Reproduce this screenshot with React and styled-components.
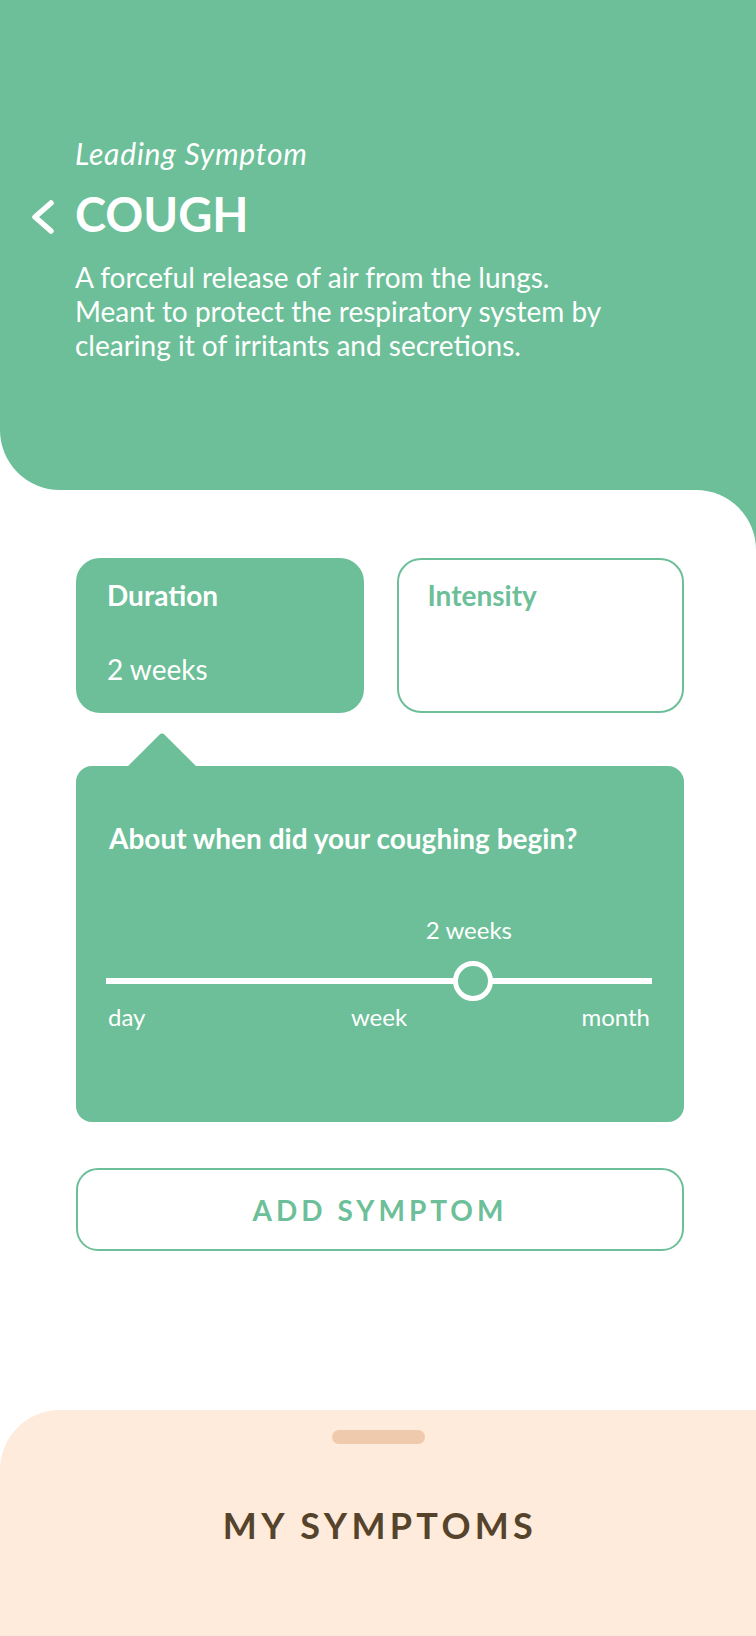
import React from 'react';
import styled, { createGlobalStyle } from 'styled-components';

const GREEN = '#6cbf98';

const GlobalStyle = createGlobalStyle`
  body {
    margin: 0;
    background: #fff;
    font-family: Lato, "Open Sans", sans-serif;
  }
`;

const Page = styled.div`
  width: 756px;
  min-height: 1636px;
  display: flex;
  flex-direction: column;
  background: #fff;
`;

const Header = styled.header`
  height: 490px;
  box-sizing: border-box;
  padding: 135px 30px 0 75px;
  background: ${GREEN};
  border-bottom-left-radius: 60px;
  color: #fff;
  display: flex;
  flex-direction: column;
`;

const Kicker = styled.div`
  font-style: italic;
  font-size: 30px;
  letter-spacing: 0.8px;
  line-height: 36px;
`;

const TitleRow = styled.div`
  display: flex;
  align-items: center;
  gap: 19px;
  margin: 15px 0 0 -45px;
`;

const BackButton = styled.button`
  margin-top: 6px;
  padding: 0;
  border: 0;
  background: none;
  display: flex;
  cursor: pointer;
`;

const Title = styled.h1`
  margin: 0;
  font-size: 47px;
  font-weight: 700;
  line-height: 56px;
`;

const Description = styled.p`
  margin: 18px 0 0;
  font-size: 28px;
  line-height: 34px;
`;

// green behind the white sheet so the rounded top-right corner shows it
const Backdrop = styled.div`
  background: ${GREEN};
  flex: 1;
  display: flex;
`;

const Sheet = styled.main`
  flex: 1;
  background: #fff;
  border-top-right-radius: 60px;
  display: flex;
  flex-direction: column;
`;

const Content = styled.div`
  padding: 68px 72px 0 76px;
  display: flex;
  flex-direction: column;
`;

const Tabs = styled.div`
  display: grid;
  grid-template-columns: 1fr 1fr;
  gap: 33px;
`;

const Tab = styled.div`
  height: 155px;
  box-sizing: border-box;
  padding: 19px 29px 0;
  border: 2px solid ${GREEN};
  border-radius: 24px;
  background: ${(p) => (p.active ? GREEN : '#fff')};
  color: ${(p) => (p.active ? '#fff' : GREEN)};
  display: flex;
  flex-direction: column;
`;

const TabLabel = styled.div`
  font-size: 28px;
  font-weight: 700;
  line-height: 1.2;
`;

const TabValue = styled.div`
  margin-top: 40px;
  font-size: 28px;
  line-height: 1.2;
`;

const Panel = styled.section`
  position: relative;
  margin-top: 53px;
  height: 356px;
  box-sizing: border-box;
  padding: 56px 32px 0 33px;
  background: ${GREEN};
  border-radius: 16px;
  color: #fff;
`;

const Pointer = styled.div`
  position: absolute;
  left: 62px;
  top: -24px;
  width: 48px;
  height: 48px;
  background: ${GREEN};
  border-top-left-radius: 4px;
  transform: rotate(45deg);
`;

const Question = styled.h2`
  margin: 0;
  font-size: 28px;
  font-weight: 700;
  line-height: 1.2;
`;

const Slider = styled.div`
  position: relative;
  margin: 60px 0 0 -3px;
  padding-top: 45px;
`;

const ValueLabel = styled.div`
  position: absolute;
  top: 0;
  transform: translateX(-50%);
  margin-left: -4px;
  font-size: 24px;
  line-height: 1.2;
  white-space: nowrap;
`;

const Track = styled.div`
  position: relative;
  height: 40px;
  display: flex;
  align-items: center;

  &::before {
    content: '';
    flex: 1;
    height: 6px;
    background: #fff;
  }
`;

const Thumb = styled.div`
  position: absolute;
  top: 0;
  width: 40px;
  height: 40px;
  box-sizing: border-box;
  margin-left: -20px;
  border: 5px solid #fff;
  border-radius: 50%;
  background: ${GREEN};
`;

const Ticks = styled.div`
  margin-top: 2px;
  display: grid;
  grid-template-columns: 1fr auto 1fr;
  font-size: 24px;
  line-height: 1.2;
  padding: 0 2px;
`;

const Tick = styled.span`
  text-align: ${(p) => p.align};
`;

const AddButton = styled.button`
  margin-top: 46px;
  height: 83px;
  border: 2px solid ${GREEN};
  border-radius: 22px;
  background: #fff;
  color: ${GREEN};
  font-family: Lato, sans-serif;
  font-size: 28px;
  font-weight: 700;
  letter-spacing: 4px;
  cursor: pointer;
`;

const Drawer = styled.footer`
  margin-top: 159px;
  height: 226px;
  background: #feebdb;
  border-top-left-radius: 60px;
  display: flex;
  flex-direction: column;
  align-items: center;
`;

const Handle = styled.div`
  margin-top: 20px;
  width: 93px;
  height: 14px;
  border-radius: 7px;
  background: #efcaac;
`;

const DrawerTitle = styled.h3`
  margin: 60px 0 0;
  padding-left: 4px;
  font-size: 36px;
  font-weight: 700;
  letter-spacing: 4.3px;
  line-height: 1.2;
  color: #55432b;
`;

const BackIcon = () => (
  <svg width="26" height="36" viewBox="0 0 26 36" fill="none">
    <path d="M21 4 L5 18 L21 32" stroke="#fff" strokeWidth="5.5" strokeLinecap="round" strokeLinejoin="round" />
  </svg>
);

export default function App() {
  const position = 0.672;
  const ticks = [
    ['day', 'left'],
    ['week', 'center'],
    ['month', 'right'],
  ];

  return (
    <Page>
      <GlobalStyle />
      <Header>
        <Kicker>Leading Symptom</Kicker>
        <TitleRow>
          <BackButton aria-label="Back">
            <BackIcon />
          </BackButton>
          <Title>COUGH</Title>
        </TitleRow>
        <Description>
          A forceful release of air from the lungs.
          <br />
          Meant to protect the respiratory system by
          <br />
          clearing it of irritants and secretions.
        </Description>
      </Header>
      <Backdrop>
        <Sheet>
          <Content>
            <Tabs>
              <Tab active>
                <TabLabel>Duration</TabLabel>
                <TabValue>2 weeks</TabValue>
              </Tab>
              <Tab>
                <TabLabel>Intensity</TabLabel>
              </Tab>
            </Tabs>
            <Panel>
              <Pointer />
              <Question>About when did your coughing begin?</Question>
              <Slider>
                <ValueLabel style={{ left: `${position * 100}%` }}>2 weeks</ValueLabel>
                <Track>
                  <Thumb style={{ left: `${position * 100}%` }} />
                </Track>
                <Ticks>
                  {ticks.map(([t, align]) => (
                    <Tick key={t} align={align}>{t}</Tick>
                  ))}
                </Ticks>
              </Slider>
            </Panel>
            <AddButton>ADD SYMPTOM</AddButton>
          </Content>
          <Drawer>
            <Handle />
            <DrawerTitle>MY SYMPTOMS</DrawerTitle>
          </Drawer>
        </Sheet>
      </Backdrop>
    </Page>
  );
}
